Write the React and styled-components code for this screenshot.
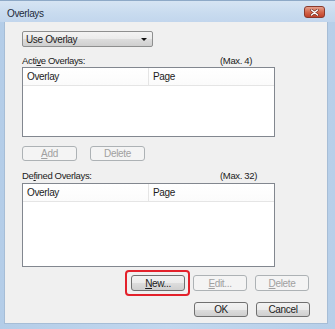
import React from 'react';
import styled, { createGlobalStyle } from 'styled-components';

const Global = createGlobalStyle`
    html, body {
        margin: 0;
        padding: 0;
        background: #b9d1ea;
    }
    body {
        font-family: "Liberation Sans", Arial, sans-serif;
        font-size: 9.5px;
        letter-spacing: -0.35px;
        color: #1b1b1b;
    }
`;

const Frame = styled.div`
    width: 335px;
    height: 329px;
    box-sizing: border-box;
    display: flex;
    flex-direction: column;
    background: linear-gradient(90deg, #b4cde8 0%, #c2d7ee 50%, #b7cfe9 100%);
    border-top: 1px solid #8ea9c7;
    padding: 0 7px 5px 4px;
`;

const TitleBar = styled.div`
    height: 21px;
    display: flex;
    align-items: center;
    justify-content: space-between;
    background: linear-gradient(180deg, #d6e4f3 0%, #c8dbef 60%, #c2d6ed 100%);
    margin: 0 -7px 0 -4px;
    padding: 0 10px 0 7px;
`;

const Title = styled.span`
    font-size: 10px;
    color: #1e2a3a;
    padding-top: 3px;
`;

const CloseBtn = styled.div`
    width: 21px;
    height: 12px;
    margin-top: 1px;
    border: 1px solid #8a3a2c;
    border-radius: 3px;
    box-sizing: border-box;
    background: linear-gradient(180deg, #e4a08d 0%, #d4674c 50%, #c0412a 100%);
    display: flex;
    align-items: center;
    justify-content: center;
`;

const Client = styled.div`
    flex: 1;
    background: #f0f0f0;
    border: 1px solid #a6bdd6;
    border-top: none;
    display: flex;
    flex-direction: column;
    padding: 9px 0 0 17px;
`;

const Combo = styled.div`
    width: 131px;
    height: 16px;
    box-sizing: border-box;
    border: 1px solid #8e8f8f;
    border-radius: 2px;
    background: linear-gradient(180deg, #f3f3f3 0%, #ebebeb 50%, #dddddd 51%, #cfcfcf 100%);
    display: flex;
    align-items: center;
    justify-content: space-between;
    padding: 0 5px 0 3px;
    font-size: 10px;
`;

const Arrow = styled.span`
    width: 0;
    height: 0;
    border-left: 3px solid transparent;
    border-right: 3px solid transparent;
    border-top: 3px solid #111;
`;

const LabelRow = styled.div`
    display: grid;
    grid-template-columns: 198px auto;
    width: 253px;
    height: 12px;
    line-height: 12px;
    margin-top: ${p => p.$top}px;
`;

const ListBox = styled.div`
    width: 253px;
    height: ${p => p.$h}px;
    box-sizing: border-box;
    margin-top: ${p => p.$top || 0}px;
    border: 1px solid #82878f;
    background: #fff;
`;

const ListHeader = styled.div`
    display: grid;
    grid-template-columns: 126px 1fr;
    height: 17px;
    border-bottom: 1px solid #e5e5e5;
    background: linear-gradient(180deg, #ffffff 0%, #fbfbfb 100%);
`;

const HeaderCell = styled.div`
    display: flex;
    align-items: center;
    padding-left: 4px;
    font-size: 10px;
    border-right: ${p => (p.$divider ? '1px solid #e5e5e5' : 'none')};
`;

const ButtonRow = styled.div`
    display: flex;
    gap: ${p => p.$gap}px;
    margin-top: ${p => p.$top}px;
    margin-left: ${p => p.$left || 0}px;
`;

const Button = styled.div`
    width: ${p => p.$w || 54}px;
    height: ${p => p.$h || 15}px;
    box-sizing: border-box;
    border-radius: 3px;
    display: flex;
    align-items: center;
    justify-content: center;
    font-size: 10px;
    border: 1px solid ${p => (p.$disabled ? '#adb2b5' : '#707070')};
    color: ${p => (p.$disabled ? '#a0a0a0' : '#1b1b1b')};
    background: ${p =>
        p.$disabled
            ? '#f4f4f4'
            : 'linear-gradient(180deg, #f2f2f2 0%, #ebebeb 50%, #dddddd 51%, #cfcfcf 100%)'};
`;

const Highlight = styled.div`
    position: relative;
    &::after {
        content: '';
        position: absolute;
        left: -6px;
        right: -5px;
        top: -5px;
        bottom: -5px;
        border: 2px solid #e3212b;
        border-radius: 4px;
    }
`;

const EmptyList = ({ h, top }) => (
    <ListBox $h={h} $top={top}>
        <ListHeader>
            <HeaderCell $divider>Overlay</HeaderCell>
            <HeaderCell>Page</HeaderCell>
        </ListHeader>
    </ListBox>
);

export default function App() {
    return (
        <>
            <Global />
            <Frame>
                <TitleBar>
                    <Title>Overlays</Title>
                    <CloseBtn>
                        <svg width="9" height="7" viewBox="0 0 9 7">
                            <path d="M1.5 1 L7.5 6 M7.5 1 L1.5 6" stroke="#6b2a1e" strokeWidth="2.6" strokeLinecap="round" />
                            <path d="M1.5 1 L7.5 6 M7.5 1 L1.5 6" stroke="#ffffff" strokeWidth="1.5" strokeLinecap="round" />
                        </svg>
                    </CloseBtn>
                </TitleBar>
                <Client>
                    <Combo>
                        <span>Use Overlay</span>
                        <Arrow />
                    </Combo>

                    <LabelRow $top={8}>
                        <span>Acti<u>v</u>e Overlays:</span>
                        <span>(Max. 4)</span>
                    </LabelRow>
                    <EmptyList h={70} />

                    <ButtonRow $gap={13} $top={9}>
                        <Button $w={55} $disabled><u>A</u>dd</Button>
                        <Button $w={55} $disabled>Delete</Button>
                    </ButtonRow>

                    <LabelRow $top={9}>
                        <span>De<u>f</u>ined Overlays:</span>
                        <span>(Max. 32)</span>
                    </LabelRow>
                    <EmptyList h={84} top={1} />

                    <ButtonRow $gap={8} $top={8} $left={109}>
                        <Highlight>
                            <Button $h={16}><u>N</u>ew...</Button>
                        </Highlight>
                        <Button $h={16} $disabled><u>E</u>dit...</Button>
                        <Button $h={16} $disabled><u>D</u>elete</Button>
                    </ButtonRow>

                    <ButtonRow $gap={8} $top={11} $left={172}>
                        <Button>OK</Button>
                        <Button>Cancel</Button>
                    </ButtonRow>
                </Client>
            </Frame>
        </>
    );
}
